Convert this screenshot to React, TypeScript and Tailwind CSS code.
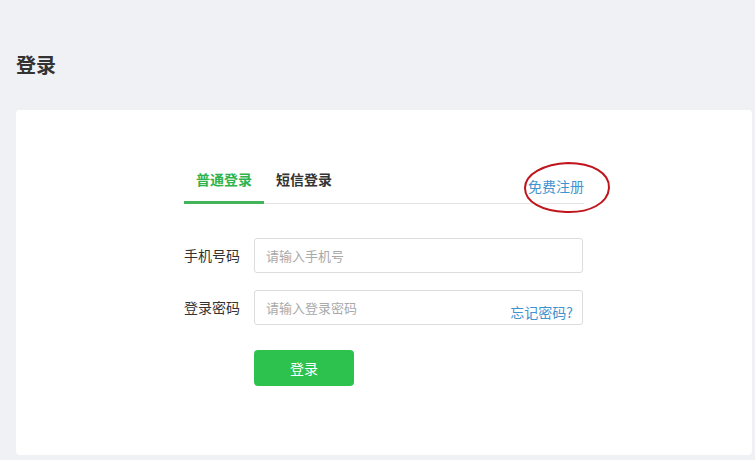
import { useState } from 'react';

const font = { fontFamily: '"Microsoft YaHei", "Noto Sans CJK SC", "Noto Sans", sans-serif' };

export default function App() {
  const [tab, setTab] = useState(0);

  return (
    <div style={font} className="min-h-[460px] w-full bg-[#f0f1f5] px-4 pt-[50px]">
      <h1 className="text-[20px] font-bold leading-[30px] text-[#333]">登录</h1>

      {/* card */}
      <div className="mt-[30px] h-[345px] w-[736px] rounded-[4px] bg-white pl-[168px] pt-[53px]">
        <div className="w-[400px]">
          {/* tabs */}
          <div className="relative flex h-[41px] items-stretch border-b border-[#e4e4e4]">
            {['普通登录', '短信登录'].map((t, i) => (
              <button
                key={t}
                onClick={() => setTab(i)}
                className={
                  tab === i
                    ? 'relative -mb-px w-[80px] border-b-[3px] border-[#45b35a] pb-[6px] text-[14px] font-bold text-[#2fb44d]'
                    : 'relative -mb-px w-[80px] border-b-[3px] border-transparent pb-[6px] text-[14px] font-bold text-[#333]'
                }
              >
                {t}
              </button>
            ))}
            <div className="flex-1" />
            <a className="relative mt-[12px] text-[14px] leading-[22px] text-[#3f94cf]">
              免费注册
              <svg
                className="pointer-events-none absolute left-[-6px] top-[-14px]"
                width="90"
                height="54"
                viewBox="0 0 90 54"
              >
                <path
                  d="M46 2 C 70 2, 88 12, 87 27 C 86 42, 68 52, 44 51 C 20 50, 3 41, 3 27 C 3 13, 22 3, 46 2 Z"
                  fill="none"
                  stroke="#c0141c"
                  strokeWidth="2"
                />
              </svg>
            </a>
          </div>

          {/* form */}
          <div className="mt-[34px] flex flex-col gap-[17px]">
            <div className="flex items-center">
              <label className="w-[70px] text-[14px] text-[#333]">手机号码</label>
              <div className="flex h-[35px] w-[329px] items-center rounded-[3px] border border-[#dcdcdc] px-[11px]">
                <input
                  className="w-full text-[13px] text-[#333] outline-none placeholder:text-[#a9a9a9]"
                  placeholder="请输入手机号"
                />
              </div>
            </div>
            <div className="flex items-center">
              <label className="w-[70px] text-[14px] text-[#333]">登录密码</label>
              <div className="flex h-[35px] w-[329px] items-center rounded-[3px] border border-[#dcdcdc] pl-[11px] pr-[9px]">
                <input
                  type="password"
                  className="flex-1 text-[13px] text-[#333] outline-none placeholder:text-[#a9a9a9]"
                  placeholder="请输入登录密码"
                />
                <a className="mt-[9px] text-[14px] text-[#3f94cf]">忘记密码?</a>
              </div>
            </div>
          </div>

          <button className="ml-[70px] mt-[25px] h-[36px] w-[100px] rounded-[4px] bg-[#2dc24e] text-[14px] text-white">
            登录
          </button>
        </div>
      </div>
    </div>
  );
}
